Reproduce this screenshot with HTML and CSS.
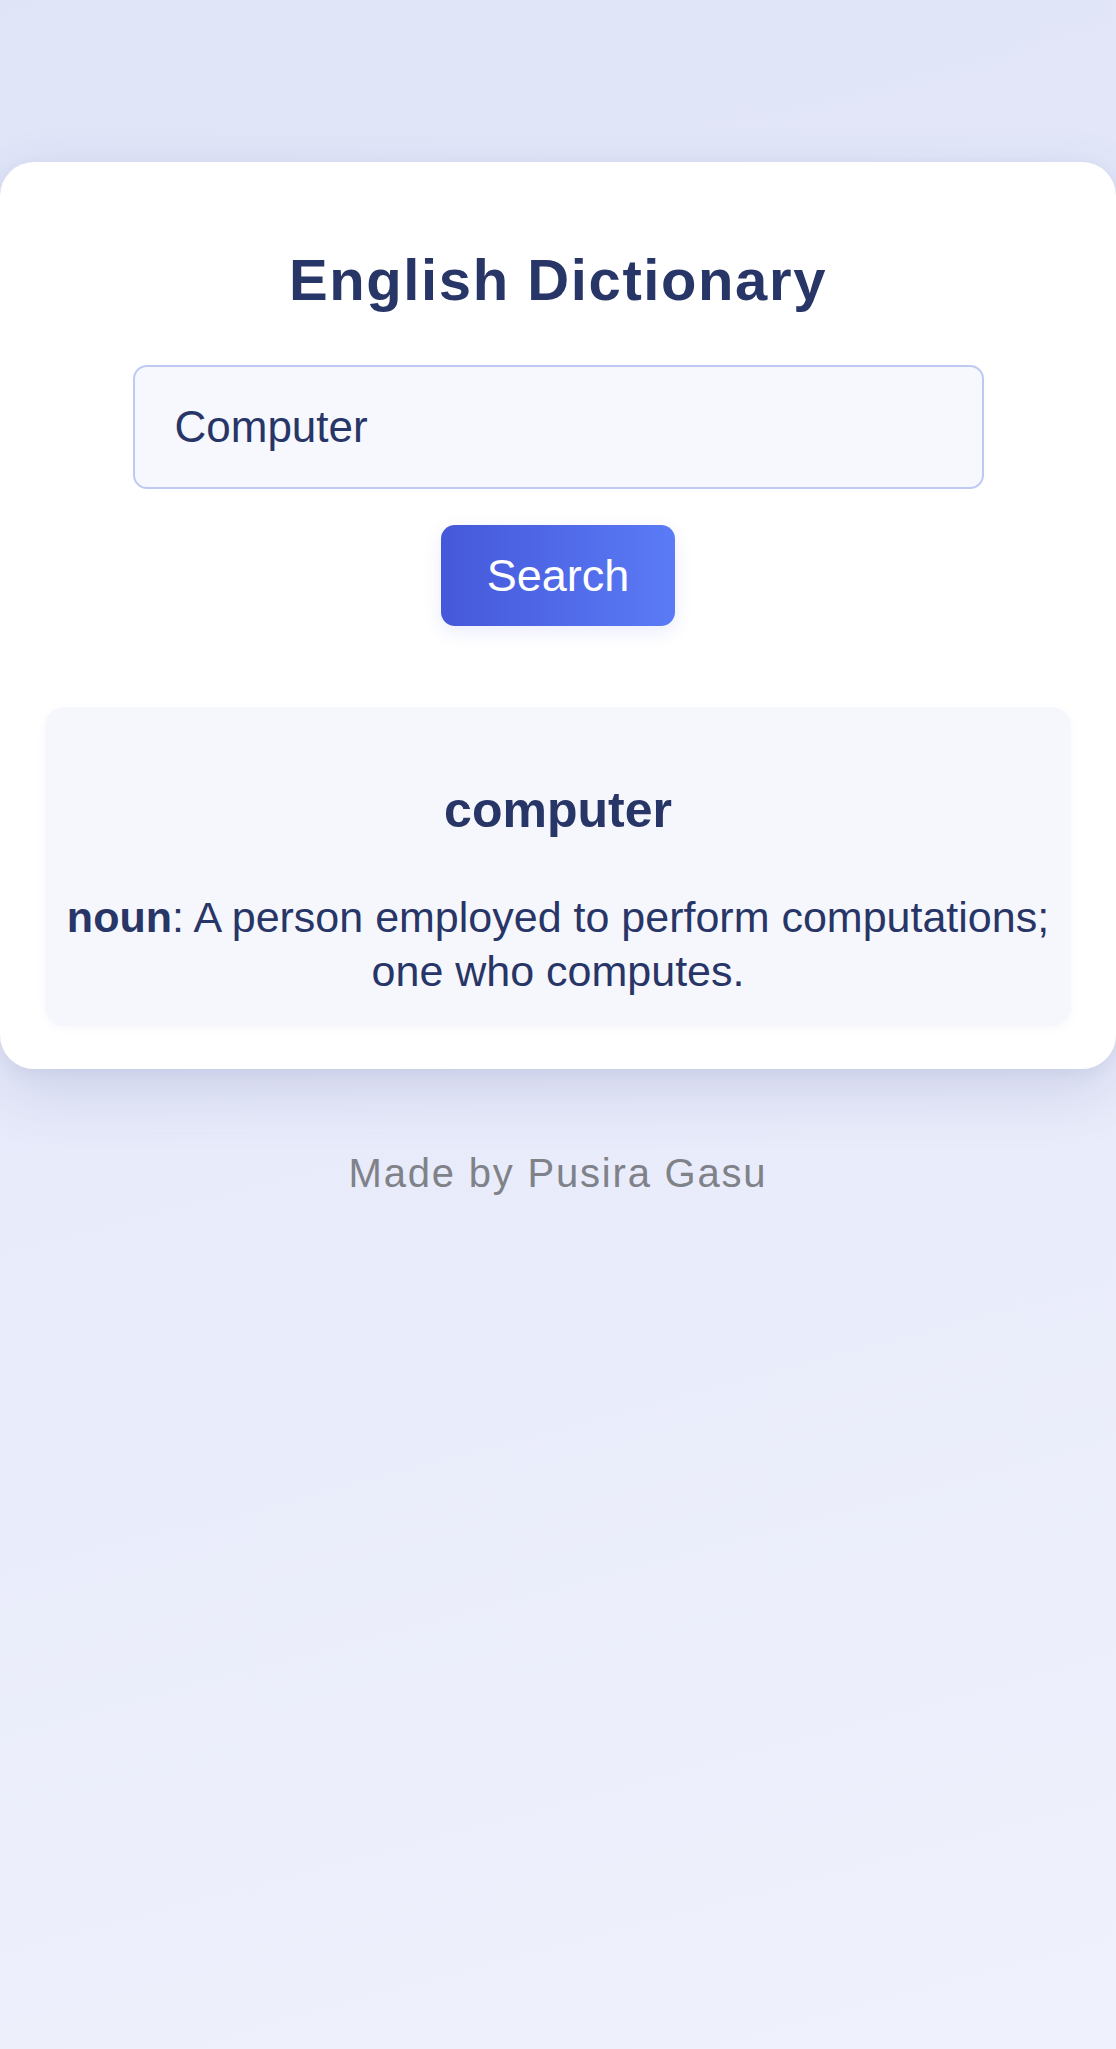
FILE: index.html
```html
<!DOCTYPE html>
<html lang="en">
<head>
<meta charset="utf-8">
<title>English Dictionary</title>
<link rel="stylesheet" href="styles.css">
</head>
<body>
<main class="page">
  <section class="card">
    <h1 class="title">English Dictionary</h1>
    <form class="search">
      <input class="search-input" type="text" value="Computer">
      <button class="search-btn" type="button">Search</button>
    </form>
    <div class="result">
      <h2 class="word">computer</h2>
      <p class="definition"><strong>noun</strong>: A person employed to perform computations; one who computes.</p>
    </div>
  </section>
  <footer class="credit">Made by Pusira Gasu</footer>
</main>
</body>
</html>
```

FILE: styles.css
```css
html, body {
  margin: 0;
  padding: 0;
}

body {
  min-height: 2049px;
  font-family: "Liberation Sans", Arial, Helvetica, sans-serif;
  background: linear-gradient(165deg, #dfe4f7 0%, #e7eafa 45%, #eff1fc 100%);
  color: #283567;
}

.page {
  padding-top: 162px;
  display: flex;
  flex-direction: column;
  align-items: center;
}

.card {
  box-sizing: border-box;
  width: 1116px;
  background: #ffffff;
  border-radius: 34px;
  padding: 83px 44px 43px;
  box-shadow: 0 22px 60px rgba(70, 80, 150, 0.16), 0 4px 14px rgba(70, 80, 150, 0.06);
  display: flex;
  flex-direction: column;
  align-items: center;
}

.title {
  margin: 0 0 51px;
  font-size: 58px;
  line-height: 69px;
  font-weight: 700;
  letter-spacing: 1.6px;
  color: #283567;
  text-align: center;
}

.search {
  display: flex;
  flex-direction: column;
  align-items: center;
  gap: 36px;
  margin: 0 0 81px;
}

.search-input {
  box-sizing: border-box;
  width: 851px;
  height: 124px;
  padding: 0 40px;
  border: 2px solid #bfcaf4;
  border-radius: 14px;
  background: #f6f8fd;
  font-family: "Liberation Sans", Arial, Helvetica, sans-serif;
  font-size: 44px;
  color: #283567;
  outline: none;
}

.search-btn {
  box-sizing: border-box;
  height: 101px;
  padding: 0 46px;
  border: none;
  border-radius: 14px;
  background: linear-gradient(90deg, #4558da 0%, #5b7bf6 100%);
  color: #ffffff;
  font-family: "Liberation Sans", Arial, Helvetica, sans-serif;
  font-size: 45px;
  box-shadow: 0 6px 18px rgba(80, 100, 230, 0.12);
  cursor: pointer;
}

.result {
  box-sizing: border-box;
  width: 1026px;
  padding: 28px 14px 28px;
  background: #f6f7fc;
  border-radius: 20px;
  box-shadow: 0 2px 10px rgba(90, 100, 170, 0.05);
  text-align: center;
}

.word {
  margin: 46px 0 51px;
  font-size: 50px;
  line-height: 58px;
  font-weight: 700;
  color: #283567;
}

.definition {
  margin: 0;
  font-size: 43px;
  line-height: 54px;
  color: #283567;
}

.definition strong {
  font-weight: 700;
}

.credit {
  margin-top: 80px;
  font-size: 40px;
  line-height: 48px;
  letter-spacing: 1.8px;
  color: #7f8289;
  text-align: center;
}
```
